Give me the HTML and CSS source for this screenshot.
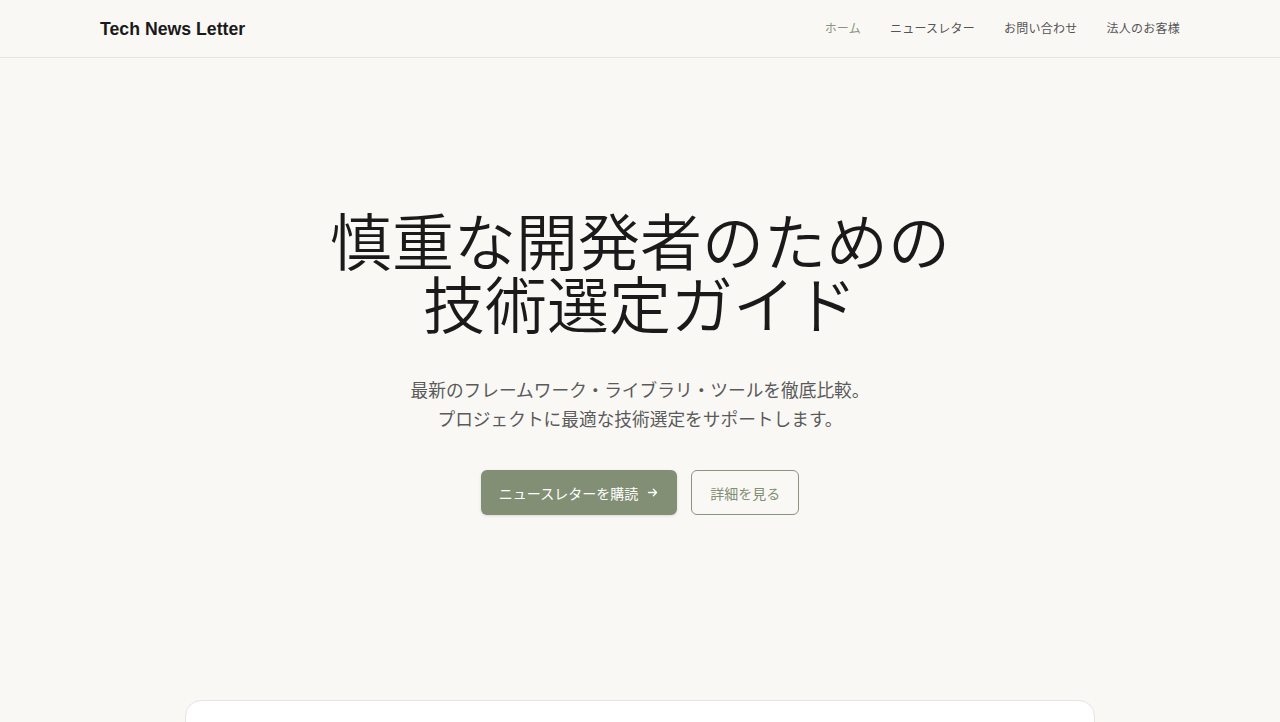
FILE: index.html
```html
<!DOCTYPE html>
<html lang="ja">
<head>
<meta charset="utf-8">
<title>Tech News Letter</title>
<link rel="stylesheet" href="styles.css">
</head>
<body>
<header class="site-header">
  <div class="header-inner">
    <div class="logo">Tech News Letter</div>
    <nav class="nav">
      <a class="nav-link active" href="#">ホーム</a>
      <a class="nav-link" href="#">ニュースレター</a>
      <a class="nav-link" href="#">お問い合わせ</a>
      <a class="nav-link" href="#">法人のお客様</a>
    </nav>
  </div>
</header>
<main>
  <section class="hero">
    <h1 class="hero-title">慎重な開発者のための<br>技術選定ガイド</h1>
    <p class="hero-sub">最新のフレームワーク・ライブラリ・ツールを徹底比較。<br>プロジェクトに最適な技術選定をサポートします。</p>
    <div class="hero-actions">
      <a class="btn btn-primary" href="#">ニュースレターを購読
        <svg class="arrow" viewBox="0 0 16 16" width="13" height="13" fill="none" stroke="currentColor" stroke-width="1.6" stroke-linecap="round" stroke-linejoin="round"><path d="M3 8h10M9 4l4 4-4 4"/></svg>
      </a>
      <a class="btn btn-outline" href="#">詳細を見る</a>
    </div>
  </section>
  <section class="card-section">
    <div class="card"></div>
  </section>
</main>
</body>
</html>
```
FILE: styles.css
```css
* { box-sizing: border-box; }
html, body { margin: 0; padding: 0; }
body {
  background: #f9f8f5;
  color: #1a1a1a;
  font-family: "Noto Sans CJK JP", "Noto Sans", sans-serif;
  overflow: hidden;
  height: 722px;
}
.site-header {
  height: 58px;
  border-bottom: 1px solid #e6e4df;
}
.header-inner {
  max-width: 1080px;
  margin: 0 auto;
  height: 100%;
  display: flex;
  align-items: center;
  justify-content: space-between;
}
.logo {
  font-family: "Liberation Sans", Arial, sans-serif;
  font-weight: 700;
  font-size: 17.7px;
  color: #1a1a1a;
  margin-top: 1px;
}
.nav {
  display: flex;
  gap: 29px;
  margin-top: -3px;
}
.nav-link {
  font-size: 12px;
  color: #555;
  text-decoration: none;
  letter-spacing: 0.02em;
}
.nav-link.active { color: #8a9580; }
.hero {
  padding-top: 150px;
  display: flex;
  flex-direction: column;
  align-items: center;
  text-align: center;
}
.hero-title {
  margin: 0;
  font-size: 62px;
  font-weight: 350;
  line-height: 63px;
  color: #1a1a1a;
}
.hero-sub {
  margin: 41px 0 0;
  font-size: 17.7px;
  line-height: 29px;
  color: #5a5a5a;
  font-weight: 400;
}
.hero-actions {
  margin-top: 37px;
  display: flex;
  gap: 14px;
}
.btn {
  display: inline-flex;
  align-items: center;
  gap: 8px;
  height: 45px;
  padding: 0 18px;
  font-size: 14px;
  border-radius: 6px;
  text-decoration: none;
}
.btn-primary {
  background: #838f75;
  color: #fff;
  box-shadow: 0 1px 3px rgba(0,0,0,0.12);
}
.btn-outline {
  border: 1px solid #8a9580;
  color: #838f75;
  padding: 0 18px;
}
.card-section {
  margin-top: 185px;
  display: flex;
  justify-content: center;
}
.card {
  width: 910px;
  height: 200px;
  background: #fff;
  border: 1px solid #e6e4e0;
  border-radius: 16px;
}
```
